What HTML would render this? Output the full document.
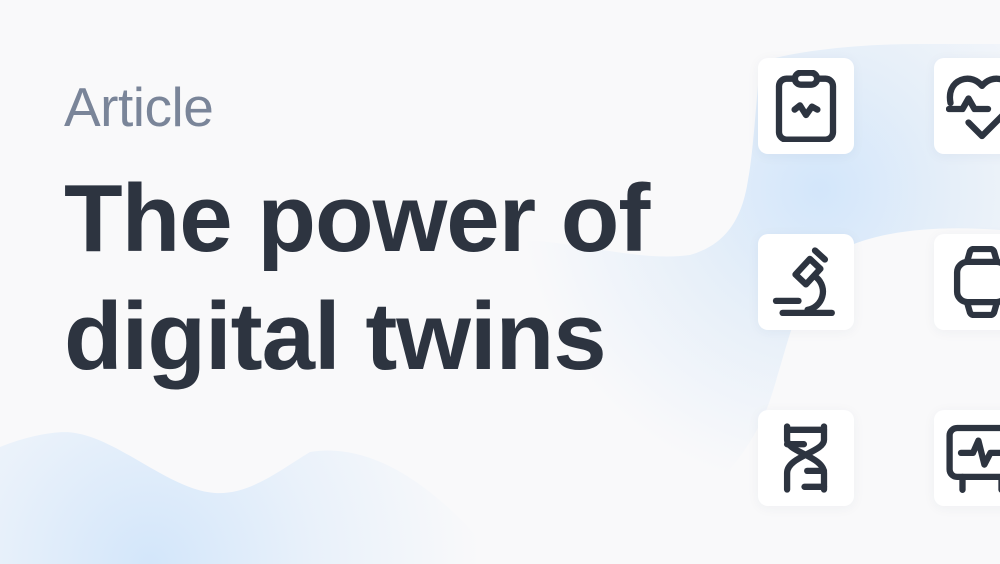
<!DOCTYPE html>
<html><head><meta charset="utf-8"><style>
html,body{margin:0;padding:0}
body{width:1000px;height:564px;overflow:hidden;position:relative;background:#f9f9fa;font-family:"Liberation Sans",sans-serif}
svg.bg{position:absolute;left:0;top:0}
.t1{position:absolute;left:64px;top:77px;font-size:55px;color:#7a8599;line-height:60px;letter-spacing:-0.5px}
.t2{position:absolute;left:64px;top:160px;font-size:96px;font-weight:bold;color:#2d3440;line-height:118px;letter-spacing:-1px}
.card{position:absolute;width:96px;height:96px;background:#fff;border-radius:10px;box-shadow:0 2px 12px rgba(40,60,90,0.05)}
.card svg{position:absolute;left:12px;top:12px}
</style></head><body>
<svg class="bg" width="1000" height="564">
<defs>
<radialGradient id="g1" cx="820" cy="190" r="300" gradientUnits="userSpaceOnUse">
<stop offset="0" stop-color="#d3e6fa"/><stop offset="0.45" stop-color="#e6eff9"/><stop offset="1" stop-color="#f9f9fa"/></radialGradient>
<radialGradient id="g2" cx="150" cy="564" r="330" gradientUnits="userSpaceOnUse">
<stop offset="0" stop-color="#d3e6fa"/><stop offset="0.5" stop-color="#e9f1fa"/><stop offset="1" stop-color="#f9f9fa"/></radialGradient>
</defs>
<path d="M760 62 C800 50 860 44 920 44 L1000 44 L1000 230 C940 225 880 230 840 250 C800 275 790 340 770 400 C760 430 740 460 720 480 L520 480 L520 240 C580 242 640 262 690 255 C725 245 742 220 748 180 C752 160 755 120 760 62 Z" fill="url(#g1)"/>
<path d="M0 447 C30 435 60 430 75 433 C120 440 170 490 215 493 C250 495 280 470 310 452 C380 440 450 500 500 564 L0 564 Z" fill="url(#g2)"/>
</svg>
<div class="t1">Article</div>
<div class="t2">The power of<br>digital twins</div>

<div class="card" style="left:758px;top:58px"><svg width="72" height="72" viewBox="0 0 24 24" fill="none" stroke="#2d3440" stroke-width="2.1" stroke-linecap="round" stroke-linejoin="round">
<rect x="8.3" y="0.9" width="7.4" height="4" rx="2"/>
<path d="M8.3 2.9H5.5A2.5 2.5 0 0 0 3 5.4V20.8A2.5 2.5 0 0 0 5.5 23.2H18.5A2.5 2.5 0 0 0 21 20.8V5.4A2.5 2.5 0 0 0 18.5 2.9H15.7"/>
<path d="M8.2 13.2L10 11.8L12 15L14 12.2L15.8 13.2"/></svg></div>

<div class="card" style="left:934px;top:58px"><svg width="72" height="72" viewBox="0 0 24 24" fill="none" stroke="#2d3440" stroke-width="2.1" stroke-linecap="round" stroke-linejoin="round">
<path d="M1.5 11C0.8 7.5 2 4.5 5 3.3C8 2.2 10.5 3.5 12 5.3C13.5 3.5 16 2.2 19 3.3C22 4.5 23.2 7.5 22.5 11"/>
<path d="M1 13H5.5L7.5 9.5L9.5 13H14"/>
<path d="M7.5 17.5L12 22L21 13"/></svg></div>

<div class="card" style="left:758px;top:234px"><svg width="72" height="72" viewBox="0 0 24 24" fill="none" stroke="#2d3440" stroke-width="2.1" stroke-linecap="round" stroke-linejoin="round">
<path d="M15 1.5L18.3 4.5"/>
<path d="M13.3 4.3L16.8 7.6L12 12.8L8.5 9.5Z"/>
<path d="M15.5 10.5A6.2 6.2 0 0 1 12.5 21.3"/>
<path d="M2 18.3H9.5"/><path d="M4.2 22.3H20.6"/></svg></div>

<div class="card" style="left:934px;top:234px"><svg width="72" height="72" viewBox="0 0 24 24" fill="none" stroke="#2d3440" stroke-width="2.1" stroke-linecap="round" stroke-linejoin="round">
<rect x="3.7" y="5.3" width="16.6" height="13.4" rx="3.5"/>
<path d="M7 5.3L8 1.8C8.3 1.2 8.7 1 9.3 1H14.7C15.3 1 15.7 1.2 16 1.8L17 5.3"/>
<path d="M7 18.7L8 22.2C8.3 22.8 8.7 23 9.3 23H14.7C15.3 23 15.7 22.8 16 22.2L17 18.7"/></svg></div>

<div class="card" style="left:758px;top:410px"><svg width="72" height="72" viewBox="0 0 24 24" fill="none" stroke="#2d3440" stroke-width="2.1" stroke-linecap="round" stroke-linejoin="round">
<path d="M5.7 1.5V6C5.7 10 18 11.5 18 17V22.5"/>
<path d="M18 1.5V6C18 10 5.7 11.5 5.7 17V22.5"/>
<path d="M5.7 2.6H18"/><path d="M5.7 7.4H11.3"/><path d="M12.4 16.3H18"/><path d="M11.5 21.6H18"/></svg></div>

<div class="card" style="left:934px;top:410px"><svg width="72" height="72" viewBox="0 0 24 24" fill="none" stroke="#2d3440" stroke-width="2.1" stroke-linecap="round" stroke-linejoin="round">
<rect x="1.2" y="2" width="21.6" height="16.3" rx="2.5"/>
<path d="M5.5 18.3V22.6"/><path d="M18.5 18.3V22.6"/>
<path d="M5 10.3H9L10.8 6.2L12.8 14.2L14.8 10.3H19"/></svg></div>
</body></html>
